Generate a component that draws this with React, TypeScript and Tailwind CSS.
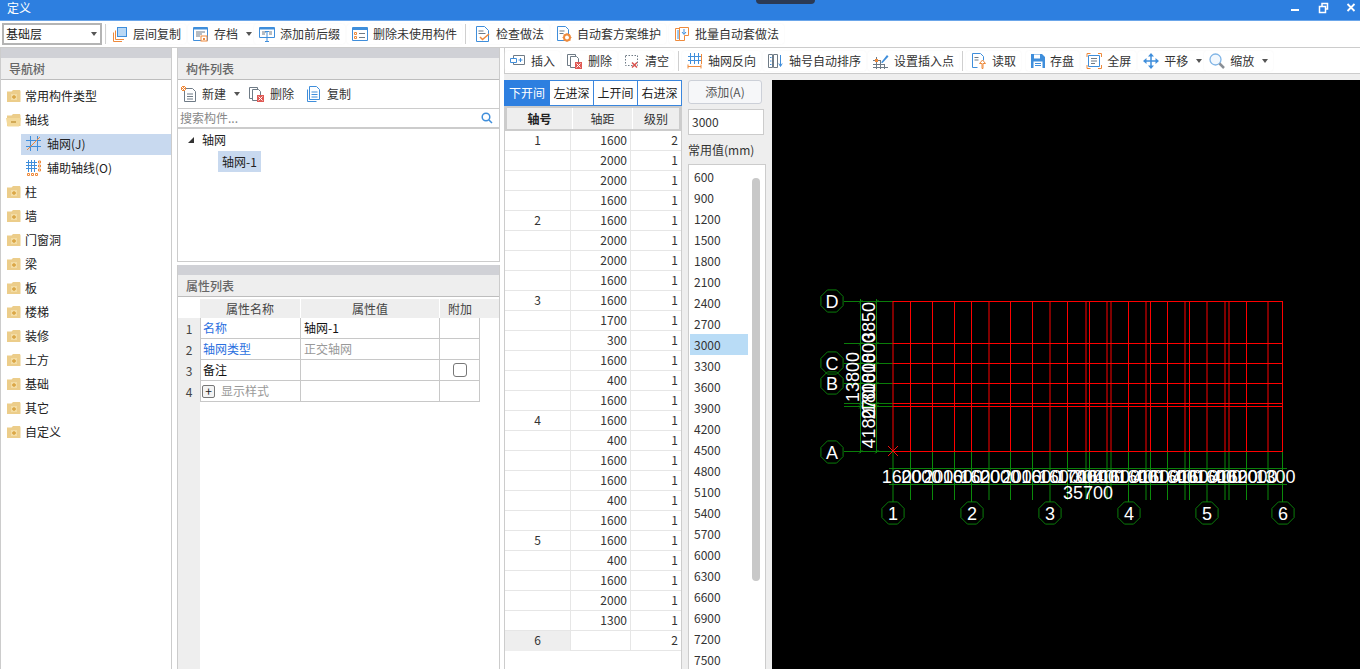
import React from "react";

const B = "#3f8edb";
const O = "#ee8a3c";
const G = "#6f7b86";
const R = "#d9534f";

const Svg = ({ children, w = 16 }: { children: React.ReactNode; w?: number }) => (
  <svg width={w} height={16} viewBox={`0 0 ${w} 16`} fill="none" className="shrink-0">
    {children}
  </svg>
);

const icons: Record<string, React.ReactNode> = {
  floorCopy: (
    <Svg>
      <path d="M1.500 15.500V6.500M1.500 15.500H10M3.500 13.500V4.500M3.500 13.500H12" stroke={O} />
      <rect x="5.500" y="1.500" width="9" height="9" fill="#b9d8f5" stroke={B} />
    </Svg>
  ),
  archive: (
    <Svg>
      <path d="M.5 1.500h14v13H.5z" stroke={B} />
      <path d="M1 1.500h13v2H1z" fill={B} />
      <path d="M3 6h9M3 8h6M3 10h4" stroke={G} />
      <rect x="8" y="10" width="6" height="5" fill="#fff" stroke={O} />
      <rect x="10" y="12" width="2" height="2" fill={O} />
    </Svg>
  ),
  prefix: (
    <Svg>
      <path d="M.5 1.500h15v10H.5z" stroke={B} />
      <path d="M1 1.500h14v2H1z" fill={B} />
      <path d="M3 6h4M10 6h3M3 8h3M10 8h3" stroke={G} />
      <path d="M6 5.500h4M8 5.500v10M6 15.500h4" stroke={B} />
    </Svg>
  ),
  unused: (
    <Svg>
      <path d="M.5 1.500h15v13H.5z" stroke={B} />
      <path d="M1 1.500h14v2.500H1z" fill={B} />
      <path d="M2.500 6.500h2v2h-2zM2.500 10.500h2v2h-2z" stroke={O} />
      <path d="M7 7.500h6M7 11.500h6" stroke={G} />
    </Svg>
  ),
  check: (
    <Svg>
      <path d="M1.500.5h8l4 4v11h-12z" stroke={B} fill="#fff" />
      <path d="M3.500 5h5M3.500 7.500h7" stroke={G} />
      <path d="M5 11l2.500 2.500L14 8" stroke={O} strokeWidth="1.500" />
    </Svg>
  ),
  gearDoc: (
    <Svg>
      <path d="M1.500.5h8l3 3v11h-11z" stroke={B} fill="#fff" />
      <path d="M3.500 5h5M3.500 7.500h4" stroke={G} />
      <circle cx="11" cy="11.500" r="3" stroke={O} strokeWidth="2" fill="#fff" />
      <path d="M11 7v2M11 14v2M6.500 11.500h2M13.500 11.500h2M8 8.500l1.400 1.400M12.800 13.300l1.400 1.400M14 8.500l-1.400 1.400M9.200 13.300L7.800 14.700" stroke={O} />
    </Svg>
  ),
  batch: (
    <Svg>
      <path d="M1.500 2.500h4v12h-4z" stroke={O} />
      <path d="M5.500 1.500h9v8h-4v5h-5z" stroke={O} fill="#fff" />
      <path d="M4 4v9" stroke={B} />
      <path d="M10 3v5M8 6l2 2.500L12 6" stroke={B} />
    </Svg>
  ),
  insert: (
    <Svg>
      <path d="M3.500 2.500h11v9h-11z" stroke={G} />
      <path d="M.5 5.500h6v4h-6z" stroke={B} fill="#fff" />
      <path d="M8.500 7h4M10.500 5v4" stroke={B} />
    </Svg>
  ),
  del: (
    <Svg>
      <path d="M.5 1.500h8v11h-8z" stroke={G} />
      <path d="M3.500 3.500h6l2 2v9h-8z" stroke={G} fill="#fff" />
      <rect x="8" y="9" width="7" height="7" fill="#e05a55" />
      <path d="M9.500 10.500l4 4M13.500 10.500l-4 4" stroke="#fff" />
    </Svg>
  ),
  clear: (
    <Svg>
      <path d="M1.500 2.500h12v10h-12z" stroke={G} strokeDasharray="1.500 1.500" />
      <path d="M8 9.500l5 5M13 9.500l-5 5" stroke={R} strokeWidth="1.500" />
    </Svg>
  ),
  reverse: (
    <Svg>
      <path d="M3.500 0v11M7.500 0v11M11.500 0v11M1 3.500h13M1 7.500h13" stroke={B} />
      <path d="M1 13.500h13M1 11.500v4M14 11.500v4" stroke={O} />
      <path d="M14.500 1v10" stroke={O} />
    </Svg>
  ),
  sort: (
    <Svg>
      <path d="M.5 1.500h4v13h-4zM5.500 1.500h4v13h-4z" stroke={G} />
      <path d="M2 4.500h1.500M2 8h1.500M2 11.500h1.500" stroke={B} />
      <path d="M12.500 2v11M10.800 10.500l1.700 3 1.700-3" stroke={B} />
    </Svg>
  ),
  point: (
    <Svg>
      <path d="M3.500 4v12M7.500 7v9M11.500 11v5M0 7.500h7M0 11.500h11M0 14.500h15" stroke={G} />
      <rect x="2" y="6" width="3" height="3" fill={O} />
      <path d="M8 9.500L14 2l1.500 1.500-6 6.500z" fill={B} />
    </Svg>
  ),
  read: (
    <Svg>
      <path d="M1.500.5h8l3 3v4M1.500.5v14h5" stroke={B} />
      <path d="M3.500 4.500h4M3.500 7h4" stroke={G} />
      <path d="M11 15.500v-5H8.500L11.500 7l3 3.500H12v5z" fill="#fff" stroke={O} />
    </Svg>
  ),
  save: (
    <Svg w={14}>
      <path d="M0 1h11l3 3v11H0z" fill={B} />
      <path d="M3 1.500h6v4H3z" fill="#fff" />
      <path d="M2.500 8.500h9v6.500h-9z" fill="#fff" />
      <path d="M4 10.500h6M4 12.500h6" stroke={B} />
    </Svg>
  ),
  full: (
    <Svg>
      <path d="M1 4V.5h3.500M12 .5h3.500V4M15.500 12v3.500H12M4.500 15.500H1V12" stroke={O} />
      <path d="M2.500 2.500h11v11h-11z" stroke={B} />
      <path d="M5 5.500h6M5 8h6M5 10.500h4" stroke={G} />
    </Svg>
  ),
  move: (
    <Svg>
      <path d="M2 8h12M8 2v12" stroke={B} strokeWidth="1.500" />
      <path d="M8 0l3 3.500H5zM8 16l3-3.500H5zM0 8l3.500-3v6zM16 8l-3.500-3v6z" fill={B} />
    </Svg>
  ),
  zoom: (
    <Svg>
      <circle cx="6.500" cy="6.500" r="5.500" stroke="#7fb4e6" strokeWidth="1.300" fill="#f2f8fe" />
      <path d="M10.500 10.500l4.500 4.500" stroke="#8a8f96" strokeWidth="2.500" />
    </Svg>
  ),
  newDoc: (
    <Svg>
      <path d="M3.500 2.500h8l3 3v10h-11z" stroke={G} fill="#fff" />
      <path d="M6 8h6M6 10.500h6M6 13h6" stroke={G} />
      <rect x="0" y="0" width="5" height="5" fill={O} />
      <path d="M0 0l5 5M5 0L0 5" stroke="#fff" />
    </Svg>
  ),
  copy: (
    <Svg>
      <path d="M1.500 3.500v12h9" stroke={B} />
      <path d="M3.500.5h7l3 3v10h-10z" stroke={B} fill="#fff" />
      <path d="M5.500 6h6M5.500 8.500h6M5.500 11h6" stroke={B} />
    </Svg>
  ),
  grid: (
    <Svg>
      <path d="M4.500 0v15M11.500 0v15M0 4.500h15M0 10.500h15" stroke={B} />
      <path d="M1 14L14 1" stroke={O} />
    </Svg>
  ),
  aux: (
    <Svg>
      <path d="M2.500 0v12M5.500 0v12M8.500 0v12M0 2.500h11M0 5.500h11M0 8.500h11" stroke={B} />
      <path d="M12.500 1h2v2h-2zM12.500 5h2v2h-2zM12.500 9h2v2h-2zM1.500 13.500h2v2h-2zM5.500 13.500h2v2h-2zM9.500 13.500h2v2h-2z" stroke={O} />
    </Svg>
  ),
};

const Caret = () => <span className="ml-[3px] inline-block h-0 w-0 border-x-[3.500px] border-t-[4px] border-x-transparent border-t-[#555]" />;

const Btn = ({ icon, label, caret, cls = "" }: { icon: string; label: string; caret?: boolean; cls?: string }) => (
  <div className={`flex h-[20px] items-center gap-[5px] rounded-[3px] bg-white px-[5px] text-[12px] text-[#333] shadow-[0_0_2px_#f3f3f3] ${cls}`}>
    {icons[icon]}
    <span className="whitespace-nowrap">{label}</span>
    {caret && <Caret />}
  </div>
);

const Sep = ({ cls = "" }: { cls?: string }) => <div className={`h-[20px] w-px bg-[#cfcfcf] ${cls}`} />;

const Folder = ({ open }: { open?: boolean }) => (
  <svg width="16" height="14" viewBox="0 0 16 14" className="shrink-0">
    <path d="M1 2.500h4.500l1.500-1.500h7l.5 1.500V13H1z" fill="#eccd8a" />
    {open && <path d="M0 5h15l-2 8.500H1.500z" fill="#f3d99a" />}
    {open ? (
      <path d="M5 9h5" stroke="#c79a3f" strokeWidth="1.500" />
    ) : (
      <>
        <rect x="5" y="5" width="6" height="6" fill="#f3dca4" />
        <path d="M6 8h4M8 6v4" stroke="#d9a33f" strokeWidth="1.300" />
      </>
    )}
  </svg>
);

const PanelHead = ({ title }: { title: string }) => (
  <div className="shrink-0">
    <div className="h-[10px] bg-[#d0d1d6]" />
    <div className="flex h-[22px] items-center border-b border-b-[#bdbdbd] bg-[#eeeeee] px-[8px] text-[12px] font-medium text-[#666]">{title}</div>
  </div>
);

const tree: string[] = ["柱", "墙", "门窗洞", "梁", "板", "楼梯", "装修", "土方", "基础", "其它", "自定义"];

const TreeRow = ({ label, open }: { label: string; open?: boolean }) => (
  <div className="flex h-[24px] items-center gap-[3px] pl-[5px] text-[12px] text-[#222]">
    <Folder open={open} />
    <span>{label}</span>
  </div>
);

const rows: [string, string, string][] = [
  ["1", "1600", "2"], ["", "2000", "1"], ["", "2000", "1"], ["", "1600", "1"],
  ["2", "1600", "1"], ["", "2000", "1"], ["", "2000", "1"], ["", "1600", "1"],
  ["3", "1600", "1"], ["", "1700", "1"], ["", "300", "1"], ["", "1600", "1"], ["", "400", "1"], ["", "1600", "1"],
  ["4", "1600", "1"], ["", "400", "1"], ["", "1600", "1"], ["", "1600", "1"], ["", "400", "1"], ["", "1600", "1"],
  ["5", "1600", "1"], ["", "400", "1"], ["", "1600", "1"], ["", "2000", "1"], ["", "1300", "1"],
  ["6", "", "2"],
];

const common = [600, 900, 1200, 1500, 1800, 2100, 2400, 2700, 3000, 3300, 3600, 3900, 4200, 4500, 4800, 5100, 5400, 5700, 6000, 6300, 6600, 6900, 7200, 7500];

const Octagon = ({ cx, cy, t }: { cx: number; cy: number; t: string }) => {
  const pts = Array.from({ length: 8 }, (_, i) => {
    const a = ((i * 45 + 22.5) * Math.PI) / 180;
    return `${cx + 12 * Math.cos(a)},${cy + 12 * Math.sin(a)}`;
  }).join(" ");
  return (
    <g>
      <polygon points={pts} fill="none" stroke="#0a7d0a" />
      <text x={cx} y={cy + 6.5} fill="#fff" fontSize="18" textAnchor="middle" fontFamily="Liberation Sans, sans-serif">{t}</text>
    </g>
  );
};

const spans = rows.slice(0, 25).map((r) => Number(r[1]));
const X0 = 893;
const SX = 389.5 / 35700;
const cum = spans.reduce<number[]>((a, s) => [...a, a[a.length - 1] + s], [0]);
const xs = cum.map((c) => X0 + c * SX);
const darkIdx = [0, 5, 8, 10, 12, 13, 15, 18, 20, 21, 22, 24];
const axisIdx = [0, 4, 8, 14, 20, 25];
const ys = [301, 343, 363, 383, 403, 406, 451];
const ySpans: [string, number][] = [["3850", 322], ["1800", 353], ["1800", 373], ["1800", 393], ["270", 404.5], ["4180", 428.5]];

const Canvas = () => (
  <svg viewBox="772 80 588 589" className="block h-full w-full">
    {ys.map((y) => (
      <React.Fragment key={y}>
        <line x1="844" x2="893" y1={y + 0.5} y2={y + 0.5} stroke="#0a7d0a" />
        <line x1="893" x2="1283" y1={y + 0.5} y2={y + 0.5} stroke="#ff0000" />
        <path d={`M859 ${y + 2.500}l3.500 -3.500M875 ${y + 2.500}l3.500 -3.500`} stroke="#0a7d0a" />
      </React.Fragment>
    ))}
    <line x1="860.5" x2="860.5" y1="299" y2="453" stroke="#0a7d0a" />
    <line x1="876.5" x2="876.5" y1="299" y2="453" stroke="#0a7d0a" />
    <line x1="889" x2="1287" y1="468.5" y2="468.5" stroke="#0a7d0a" />
    <line x1="889" x2="1287" y1="484.5" y2="484.5" stroke="#0a7d0a" />
    {xs.map((x, i) => {
      const dark = darkIdx.includes(i);
      const px = dark ? Math.round(x) : Math.floor(x) + 0.5;
      const isAxis = axisIdx.includes(i);
      return (
        <React.Fragment key={i}>
          <line x1={px} x2={px} y1="301" y2="451" stroke="#ff0000" />
          <line x1={px} x2={px} y1="452" y2={isAxis ? 502 : 500} stroke="#0a8a0a" />
        </React.Fragment>
      );
    })}
    {xs.slice(0, -1).map((x, i) => (
      <text key={i} x={(x + xs[i + 1]) / 2} y="483" fill="#fff" fontSize="18" textAnchor="middle" fontFamily="Liberation Sans, sans-serif">{spans[i]}</text>
    ))}
    <text x="1088" y="499" fill="#fff" fontSize="18" textAnchor="middle" fontFamily="Liberation Sans, sans-serif">35700</text>
    {ySpans.map(([t, y], i) => (
      <text key={i} x="875" y={y} transform={`rotate(-90 875 ${y})`} fill="#fff" fontSize="18" textAnchor="middle" fontFamily="Liberation Sans, sans-serif">{t}</text>
    ))}
    <text x="859" y="377" transform="rotate(-90 859 377)" fill="#fff" fontSize="18" textAnchor="middle" fontFamily="Liberation Sans, sans-serif">13800</text>
    {([["D", 301], ["C", 363], ["B", 383], ["A", 452]] as [string, number][]).map(([t, y]) => (
      <Octagon key={t} cx={832} cy={y} t={t} />
    ))}
    {axisIdx.map((i, n) => (
      <Octagon key={i} cx={Math.round(xs[i])} cy={513} t={String(n + 1)} />
    ))}
    <path d="M888 446l10 10M898 446l-10 10" stroke="#f01010" />
  </svg>
);

export default function App() {
  return (
    <div className="flex h-[669px] w-[1360px] flex-col overflow-hidden bg-white font-['Noto_Sans_CJK_SC',sans-serif] text-[12px]">
      <div className="relative h-[21px] shrink-0 border-b border-b-[#6ba6ea] bg-[#2d7fe0]">
        <span className="absolute left-[7px] top-0 text-[12px] leading-[15px] text-white">定义</span>
        <div className="absolute left-[756px] top-0 h-[4px] w-[59px] rounded-b-[4px] bg-[#2b3a55]" />
        <svg className="absolute left-[1285px] top-0" width="75" height="16" viewBox="0 0 75 16" fill="none">
          <path d="M6 10h8" stroke="#fff" strokeWidth="2" />
          <path d="M34.500 6.500h6v6h-6zM37 6V3.500h5.500V9H41" stroke="#fff" strokeWidth="1.500" />
          <path d="M62.500 4l7 7M69.500 4l-7 7" stroke="#fff" strokeWidth="1.800" />
        </svg>
      </div>

      <div className="flex h-[27px] shrink-0 items-center border-b border-b-[#cccccc] bg-white pl-[2px]">
        <div className="flex h-[22px] w-[100px] items-center justify-between border-2 border-[#b4b4b4] pl-[2px] pr-[3px] text-[12px] text-[#222]">
          基础层
          <span className="h-0 w-0 border-x-[3.500px] border-t-[4px] border-x-transparent border-t-[#555]" />
        </div>
        <Sep cls="ml-[3px]" />
        <Btn icon="floorCopy" label="层间复制" cls="ml-[1px]" />
        <Btn icon="archive" label="存档" caret cls="ml-[2px]" />
        <Btn icon="prefix" label="添加前后缀" cls="-ml-[3px]" />
        <Btn icon="unused" label="删除未使用构件" cls="ml-[2px]" />
        <Sep cls="ml-[3px]" />
        <Btn icon="check" label="检查做法" cls="ml-[4px]" />
        <Btn icon="gearDoc" label="自动套方案维护" cls="ml-[2px]" />
        <Btn icon="batch" label="批量自动套做法" cls="ml-[3px]" />
      </div>

      <div className="flex min-h-0 flex-1">
        {/* Navigation tree */}
        <div className="flex w-[172px] shrink-0 flex-col border-x border-x-[#cccccc]">
          <PanelHead title="导航树" />
          <div className="pt-[4px]">
            <TreeRow label="常用构件类型" />
            <TreeRow label="轴线" open />
            <div className="my-[1.500px] ml-[20px] flex h-[21px] items-center gap-[5px] bg-[#c8d9ef] pl-[5px] text-[#222]">
              {icons.grid}
              <span>轴网(J)</span>
            </div>
            <div className="ml-[20px] flex h-[24px] items-center gap-[5px] pl-[5px] text-[#222]">
              {icons.aux}
              <span>辅助轴线(O)</span>
            </div>
            {tree.map((t) => (
              <TreeRow key={t} label={t} />
            ))}
          </div>
        </div>

        {/* Middle column */}
        <div className="ml-[5px] flex w-[323px] shrink-0 flex-col">
          <div className="flex h-[214px] shrink-0 flex-col border border-t-0 border-[#cccccc]">
            <PanelHead title="构件列表" />
            <div className="flex h-[29px] shrink-0 items-center border-b border-b-[#cccccc] pl-[3px] text-[#333]">
              <div className="flex items-center gap-[5px]">{icons.newDoc}<span>新建</span><Caret /></div>
              <div className="ml-[9px] flex items-center gap-[5px]">{icons.del}<span>删除</span></div>
              <div className="ml-[12px] flex items-center gap-[5px]">{icons.copy}<span>复制</span></div>
            </div>
            <div className="flex h-[20px] shrink-0 items-center justify-between border-b-2 border-b-[#cccccc] pl-[2px] pr-[6px] text-[12px] text-[#888]">
              搜索构件...
              <svg width="12" height="12" viewBox="0 0 12 12" fill="none"><circle cx="5" cy="5" r="3.800" stroke="#3f8edb" strokeWidth="1.500" /><path d="M8 8l3 3" stroke="#3f8edb" strokeWidth="1.500" /></svg>
            </div>
            <div className="pt-[1px] text-[#222]">
              <div className="flex h-[20px] items-center pl-[10px]">
                <span className="h-0 w-0 border-b-[6px] border-l-[6px] border-b-[#333] border-l-transparent" />
                <span className="ml-[8px]">轴网</span>
              </div>
              <div className="ml-[40px] mt-[1px] flex h-[21px] w-[43px] items-center justify-center bg-[#c8d9ef]">轴网-1</div>
            </div>
          </div>

          <div className="mt-[3px] flex min-h-0 flex-1 flex-col border border-y-0 border-[#cccccc]">
            <PanelHead title="属性列表" />
            <div className="mt-[2px] grid grid-cols-[22px_101px_139px_40px_1fr] grid-rows-[19px_21px_21px_21px_21px] text-[12px]">
              <div className="bg-white" />
              <div className="flex items-center justify-center border-r border-r-white bg-[#eeeeee] text-[#444]">属性名称</div>
              <div className="flex items-center justify-center border-r border-r-white bg-[#eeeeee] text-[#444]">属性值</div>
              <div className="flex items-center justify-center bg-[#eeeeee] text-[#444]">附加</div>
              <div className="bg-[#eeeeee]" />

              <div className="flex items-center justify-center bg-[#eeeeee] text-[#444]">1</div>
              <div className="flex items-center border-x border-b border-[#c8c8c8] pl-[2px] text-[#2a6fe0]">名称</div>
              <div className="flex items-center border-r border-b border-[#c8c8c8] pl-[3px] text-[#111]">轴网-1</div>
              <div className="border-r border-b border-[#c8c8c8]" />
              <div />

              <div className="flex items-center justify-center bg-[#eeeeee] text-[#444]">2</div>
              <div className="flex items-center border-x border-b border-[#c8c8c8] pl-[2px] text-[#2a6fe0]">轴网类型</div>
              <div className="flex items-center border-r border-b border-[#c8c8c8] pl-[3px] text-[#999]">正交轴网</div>
              <div className="border-r border-b border-[#c8c8c8]" />
              <div />

              <div className="flex items-center justify-center bg-[#eeeeee] text-[#444]">3</div>
              <div className="flex items-center border-x border-b border-[#c8c8c8] pl-[2px] text-[#111]">备注</div>
              <div className="border-r border-b border-[#c8c8c8]" />
              <div className="flex items-center justify-center border-r border-b border-[#c8c8c8]">
                <div className="h-[14px] w-[14px] rounded-[3px] border border-[#777] bg-white" />
              </div>
              <div />

              <div className="flex items-center justify-center bg-[#eeeeee] text-[#444]">4</div>
              <div className="flex items-center gap-[6px] border-x border-b border-[#c8c8c8] pl-[1px] text-[#999]">
                <span className="flex h-[13px] w-[13px] items-center justify-center rounded-[2px] border border-[#777] bg-[#f4f4f4] text-[12px] leading-none text-[#222]">+</span>
                显示样式
              </div>
              <div className="border-r border-b border-[#c8c8c8]" />
              <div className="border-r border-b border-[#c8c8c8]" />
              <div />
            </div>
            <div className="w-[22px] flex-1 bg-[#eeeeee]" />
          </div>
        </div>

        {/* Right column */}
        <div className="ml-[4px] flex min-w-0 flex-1 flex-col">
          <div className="flex h-[26px] shrink-0 items-center border-b border-l border-[#cccccc]">
            <Btn icon="insert" label="插入" />
            <Btn icon="del" label="删除" cls="ml-[2px]" />
            <Btn icon="clear" label="清空" cls="ml-[2px]" />
            <Sep cls="ml-[4px]" />
            <Btn icon="reverse" label="轴网反向" cls="ml-[3px]" />
            <Btn icon="sort" label="轴号自动排序" cls="ml-[2px]" />
            <Btn icon="point" label="设置插入点" cls="ml-[2px]" />
            <Sep cls="ml-[3px]" />
            <Btn icon="read" label="读取" cls="ml-[3px]" />
            <Btn icon="save" label="存盘" cls="ml-[5px]" />
            <Btn icon="full" label="全屏" cls="ml-[2px]" />
            <Btn icon="move" label="平移" caret cls="ml-[2px]" />
            <Btn icon="zoom" label="缩放" caret cls="-ml-[3px]" />
          </div>
          <div className="flex min-h-0 flex-1 bg-[#eeeeee] pt-[6px]">
            {/* Axis table */}
            <div className="flex w-[178px] shrink-0 flex-col border-x border-x-[#cccccc] bg-white">
              <div className="-mx-px flex h-[26px] shrink-0">
                <div className="flex w-[46px] items-center justify-center bg-[#2d7fe0] text-white">下开间</div>
                {["左进深", "上开间", "右进深"].map((t) => (
                  <div key={t} className="flex w-[44px] items-center justify-center border border-l-0 border-[#3a86dd] text-[#222]">{t}</div>
                ))}
              </div>
              <div className="grid h-[25px] shrink-0 grid-cols-[66px_60px_1fr] border-2 border-[#cccccc] text-[12px]">
                <div className="flex items-center justify-center border-r border-r-white bg-[#eeeeee] font-bold text-[#222]">轴号</div>
                <div className="flex items-center justify-center border-r border-r-white bg-[#eeeeee] text-[#333]">轴距</div>
                <div className="flex items-center justify-center bg-[#eeeeee] text-[#333]">级别</div>
              </div>
              {rows.map((r, i) => (
                <div key={i} className="grid h-[20px] shrink-0 grid-cols-[66px_60px_1fr] border-b border-b-[#e6e6e6] text-[#333]">
                  <div className={`flex items-center justify-center border-r border-r-[#e6e6e6] pb-[2px] ${i === 25 ? "bg-[#eeeeee]" : ""}`}>{r[0]}</div>
                  <div className="flex items-center justify-end border-r border-r-[#e6e6e6] pb-[2px] pr-[3px]">{r[1]}</div>
                  <div className="flex items-center justify-end pb-[2px] pr-[3px]">{r[2]}</div>
                </div>
              ))}
            </div>

            {/* Common values */}
            <div className="flex w-[90px] shrink-0 flex-col pl-[6px]">
              <div className="flex h-[24px] w-[74px] shrink-0 items-center justify-center rounded-[3px] border border-[#ccd0d8] bg-[#f6f7f9] text-[#555]">添加(A)</div>
              <div className="mt-[5px] flex h-[26px] w-[76px] shrink-0 items-center border border-[#cccccc] bg-white pl-[3px] text-[#333]">3000</div>
              <div className="mt-[5px] h-[24px] shrink-0 leading-[20px] text-[#333]">常用值(mm)</div>
              <div className="relative w-[78px] flex-1 overflow-hidden border border-b-0 border-[#cccccc] bg-white pl-[1px] pt-[1px]">
                {common.map((v) => (
                  <div key={v} className={`flex h-[21px] w-[58px] items-center pl-[4px] text-[#333] ${v === 3000 ? "bg-[#b9dcf6]" : ""}`}>{v}</div>
                ))}
                <div className="absolute left-[63px] top-[13px] h-[403px] w-[8px] rounded-[4px] bg-[#c8c8c8]" />
              </div>
            </div>

            <div className="min-w-0 flex-1 bg-black">
              <Canvas />
            </div>
          </div>
        </div>
      </div>
    </div>
  );
}
